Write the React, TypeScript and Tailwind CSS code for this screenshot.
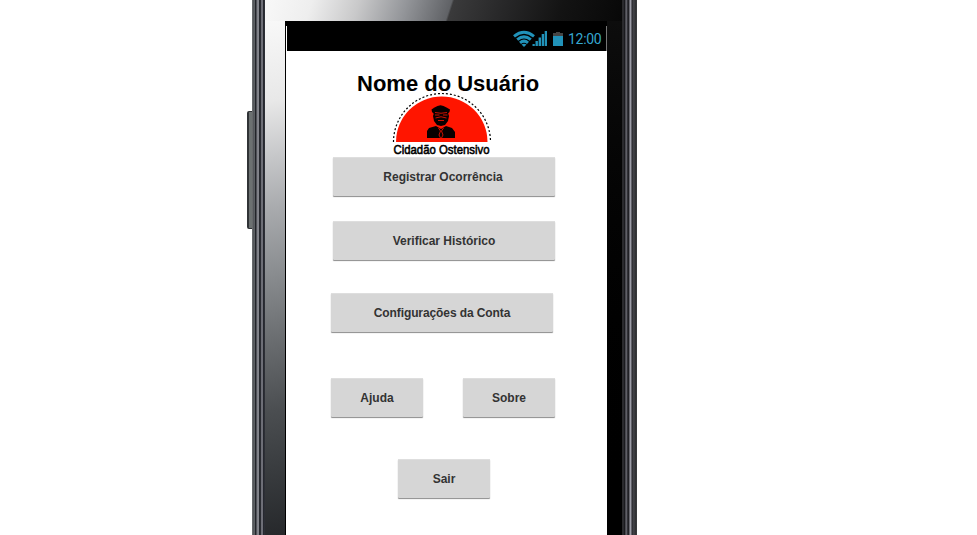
const edgeL = 'bg-[linear-gradient(90deg,#88898c_0px,#45484b_1px,#65686c_2px,#53565a_3px,#23252a_3px,#23252a_4px,#7c7d84_5px,#85868d_7px,#25272d_7px,#2b2d33_9px,#6b6c74_9px,#70717a_11px,#23252b_11px,#30323a_13px)]';
const edgeR = 'bg-[linear-gradient(90deg,#151515_0px,#3d3d42_1px,#17171a_2px,#1c1c20_3px,#74747c_4px,#4b4b52_5px,#1b1b1f_6px,#28282d_7px,#a4a4ad_8px,#9595a0_9px,#2a2a2f_10px,#48484d_12px,#2d2e31_13px,#3b3c3f_15px)]';

function MenuButton({ label, className }: { label: string; className: string }) {
  return (
    <button
      className={`flex h-[39px] shrink-0 items-center justify-center rounded-[1px] bg-[#d6d6d6] text-[12px] font-bold text-[#333] shadow-[0_1px_1px_#8c8c8c,inset_0_1px_0_#dedede] ${className}`}
    >
      {label}
    </button>
  );
}

function StatusIcons() {
  return (
    <svg width="52" height="18" viewBox="0 0 52 18" className="shrink-0">
      <g fill="none" stroke="#2192b9" strokeWidth="3">
        <path d="M1 6.300Q11 -1.700 21 6.300" />
        <path d="M4.200 9.700Q11 4 17.800 9.700" />
        <path d="M7 12.900Q11 9.400 15 12.900" />
      </g>
      <path d="M8.500 14.600Q11 12.700 13.500 14.600L11 17Z" fill="#2192b9" />
      <path d="M19.500 14h2.300v2h-2.300zM22.500 11h2.400v5h-2.400zM25.600 7.500h2.400v8.500h-2.400zM28.700 4h2.400v12h-2.400zM31.700 1h2.300v15h-2.300z" fill="#2192b9" />
      <path d="M40 3h3V2h4v1h3v3H40z" fill="#454545" />
      <path d="M40 6h10v10H40z" fill="#2192b9" />
    </svg>
  );
}

function Logo() {
  return (
    <svg width="100" height="65" viewBox="0 0 100 65" className="block overflow-visible">
      <path d="M1.500 49A48.500 48.500 0 0 1 98.500 49" fill="none" stroke="#000" strokeWidth="1.200" strokeDasharray="2 2" />
      <path d="M4 49A45.750 45.500 0 0 1 95.500 49Z" fill="#ff1500" />
      <g fill="#080000">
        <path d="M39.500 16.500l3-2 3-1.500 3-.700 3 .700 3 1.500 3.500 2-.500 2.500-2 2H42l-2-2z" />
        <path d="M42 20h14l1 3-1 5-3 4-4 1-4-1-3-4-1-5z" />
        <path d="M35 45v-7l2-3 7-2 5 3 5-3 6 2 3 4v6z" />
      </g>
      <path d="M43 19.500q6 1.500 12 0M43 22h4.500M51 22h4.500M43.500 25q5.500-2.500 11 0M46 27.500h6" stroke="#ff1500" strokeWidth=".8" fill="none" />
      <path d="M46.500 35l2 3-1.500 4 1.500 3M51.500 35l-2 3 1.500 4-1.500 3" stroke="#ff1500" strokeWidth=".8" fill="none" />
      <text x="1.500" y="61.200" textLength="96" lengthAdjust="spacingAndGlyphs" fontSize="13.500" stroke="#000" strokeWidth=".6" fontFamily="Liberation Sans, Arial, sans-serif">Cidadão Ostensivo</text>
    </svg>
  );
}

export default function App() {
  return (
    <main className="flex h-[535px] w-[977px] overflow-hidden bg-white pl-[247px] font-['Liberation_Sans',Arial,sans-serif]">
      <div className="mt-[111px] h-[118px] w-[5px] rounded-l-[2px] border-y border-l-2 border-[#303336] bg-[#6c7171]" />
      <div className={`h-full w-[13px] ${edgeL}`} />
      <div className="flex h-full w-[357px] flex-col">
        <div className="h-[21px] shrink-0 bg-[linear-gradient(108deg,#f8f8f8_0px,#eeeeee_45px,#c9c9ca_90px,#94969a_135px,#606266_178px,#3a3a3b_180px,#272728_230px,#131313_285px,#080808_345px)]" />
        <div className="flex min-h-0 flex-1">
          <div className="w-[20px] bg-[linear-gradient(170deg,#f8f8f8_0px,#e8e8e8_80px,#c6c7c9_135px,#a9abae_185px,#8c8f92_245px,#686b6e_320px,#4b4e51_385px,#3a3d40_440px,#25272a_514px)]" />
          <div className="flex w-[322px] flex-col border-l border-black bg-white">
            <div className="h-[5px] shrink-0 bg-black" />
            <header className="ml-px flex h-[25px] shrink-0 items-center border-r border-[#777] bg-black pl-[226px] font-[Roboto,sans-serif] text-[14px] text-[#35a6cf]">
              <StatusIcons />
              <span className="ml-[3px] mt-[2px] tracking-[-0.3px]">12:00</span>
            </header>
            <section className="flex flex-1 flex-col">
              <h1 className="ml-[71px] mt-[20px] h-[22px] whitespace-nowrap text-[22px] font-bold leading-[25px] text-black">Nome do Usuário</h1>
              <div className="ml-[106px] h-[65px]"><Logo /></div>
              <MenuButton label="Registrar Ocorrência" className="-mt-px ml-[47px] w-[222px] pr-[2px]" />
              <MenuButton label="Verificar Histórico" className="ml-[47px] mt-[25px] w-[222px]" />
              <MenuButton label="Configurações da Conta" className="ml-[45px] mt-[33px] w-[222px] tracking-[-0.1px]" />
              <div className="ml-[45px] mt-[46px] flex gap-[40px]">
                <MenuButton label="Ajuda" className="w-[92px]" />
                <MenuButton label="Sobre" className="w-[92px]" />
              </div>
              <MenuButton label="Sair" className="ml-[112px] mt-[42px] w-[92px]" />
            </section>
          </div>
          <div className="w-[15px] bg-gradient-to-b from-[#0d0d0d] to-black" />
        </div>
      </div>
      <div className={`h-full w-[15px] ${edgeR}`} />
    </main>
  );
}
